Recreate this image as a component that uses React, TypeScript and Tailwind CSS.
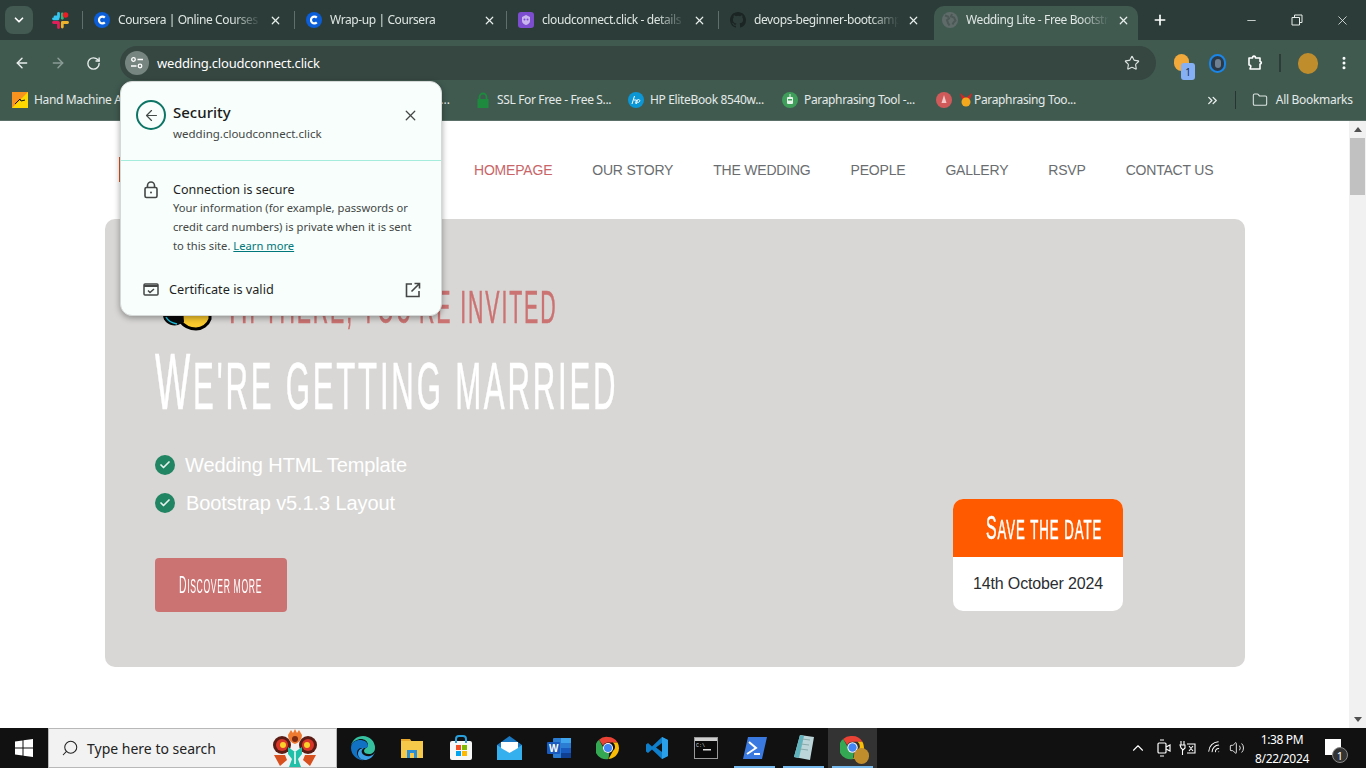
import React from "react";
import { ArrowLeft, ArrowRight, RotateCw, Star, X, Plus, Minus, ChevronDown, ChevronsRight, Folder, MoreVertical, Search, ChevronUp, Wifi, Volume2, Check } from "lucide-react";

const ui = "font-['Noto_Sans','Open_Sans',sans-serif]";
const display = "font-['Liberation_Sans_Narrow','Liberation_Sans',sans-serif]";
const fade = "[mask-image:linear-gradient(to_right,black_80%,transparent)]";

function CFav() {
  return (
    <svg width="16" height="16" viewBox="0 0 16 16" className="shrink-0">
      <circle cx="8" cy="8" r="8" fill="#0b5ed7" />
      <path d="M10.800 5.600A3.400 3.400 0 1 0 10.800 10.400" fill="none" stroke="#fff" strokeWidth="2.200" />
    </svg>
  );
}

function Slack() {
  return (
    <svg width="17" height="17" viewBox="0 0 17 17">
      <path d="M6.500 1.500v3.500H3" stroke="#36c5f0" strokeWidth="2.800" strokeLinecap="round" strokeLinejoin="round" fill="none" />
      <path d="M1.500 6.800h4.500" stroke="#36c5f0" strokeWidth="2.800" strokeLinecap="round" />
      <path d="M10.300 1.800v4.500" stroke="#2eb67d" strokeWidth="2.800" strokeLinecap="round" />
      <path d="M10.500 10.500H15.500" stroke="#ecb22e" strokeWidth="2.800" strokeLinecap="round" />
      <path d="M10.300 11v4" stroke="#ecb22e" strokeWidth="2.800" strokeLinecap="round" />
      <path d="M1.500 10.500H6" stroke="#e01e5a" strokeWidth="2.800" strokeLinecap="round" />
      <path d="M6.500 11v4.500" stroke="#e01e5a" strokeWidth="2.800" strokeLinecap="round" />
      <circle cx="13.500" cy="3" r="2.800" fill="#ea1c24" />
    </svg>
  );
}

function Bot() {
  return (
    <svg width="16" height="16" viewBox="0 0 16 16" className="shrink-0">
      <rect width="16" height="16" rx="3" fill="#7c4dce" />
      <path d="M4 5l4-2 4 2v4c0 2-2 3.500-4 4-2-.5-4-2-4-4z" fill="#c9b5ee" />
      <circle cx="6.500" cy="7.500" r="1" fill="#7c4dce" />
      <circle cx="9.500" cy="7.500" r="1" fill="#7c4dce" />
    </svg>
  );
}

function Github() {
  return (
    <svg width="16" height="16" viewBox="0 0 16 16" className="shrink-0">
      <path
        fill="#1b2523"
        d="M8 0C3.580 0 0 3.580 0 8c0 3.540 2.290 6.530 5.470 7.590.4.070.55-.17.55-.38 0-.19-.01-.82-.01-1.490-2.010.370-2.530-.49-2.690-.940-.09-.230-.48-.940-.82-1.130-.28-.150-.68-.520-.01-.530.630-.010 1.080.580 1.230.820.720 1.210 1.870.870 2.330.660.070-.520.280-.870.510-1.070-1.780-.200-3.640-.890-3.640-3.950 0-.870.310-1.590.820-2.150-.080-.200-.360-1.020.080-2.120 0 0 .670-.210 2.200.820a7.500 7.500 0 0 1 4 0c1.530-1.040 2.200-.820 2.200-.820.440 1.100.160 1.920.080 2.120.510.560.820 1.270.820 2.150 0 3.070-1.870 3.750-3.650 3.950.290.250.540.730.540 1.480 0 1.070-.010 1.930-.010 2.200 0 .210.150.460.550.380A8 8 0 0 0 16 8c0-4.420-3.580-8-8-8z"
      />
    </svg>
  );
}

function Globe() {
  return (
    <svg width="16" height="16" viewBox="0 0 16 16" className="shrink-0">
      <circle cx="8" cy="8" r="8" fill="#5f6b69" />
      <path d="M3 3.500l3 1 1 2-2 1.500 1 3 1.500 2.500M10 2l-1 2.500 3 1 1.500 3-2 2-1 2" fill="none" stroke="#4b5855" strokeWidth="2" />
    </svg>
  );
}

function Tab({ icon, title, active, w, sep, pad }: { icon: React.ReactNode; title: string; active?: boolean; w: string; sep?: boolean; pad: string }) {
  return (
    <div className={`relative flex items-center h-[34px] pb-[6px] shrink-0 ${pad} ${w} ${active ? "bg-[#405a50] rounded-t-[10px]" : ""}`}>
      {sep && <span className="absolute left-0 top-[5px] h-[18px] w-px bg-[#5e706b]" />}
      {icon}
      <span className={`ml-2 mr-[8px] flex-1 overflow-hidden whitespace-nowrap text-[12px] tracking-[-0.4px] text-[#dfe6e3] ${fade}`}>{title}</span>
      <X size={13} strokeWidth={2.200} className="shrink-0 text-[#e8eeec]" />
    </div>
  );
}

function TabStrip() {
  return (
    <div className="flex h-[40px] shrink-0 bg-[#2c3d39] pt-[6px] items-start">
      <div className="ml-[5px] flex h-[28px] w-[28px] items-center justify-center rounded-lg bg-[#425a52]">
        <ChevronDown size={14} strokeWidth={3} className="text-white" />
      </div>
      <div className="ml-[19px] flex h-[28px] w-[31px] items-center -mr-px">
        <Slack />
      </div>
      <Tab sep w="w-[212px]" pad="pl-[12px] pr-[12px]" icon={<CFav />} title="Coursera | Online Courses From Top" />
      <Tab sep w="w-[212px]" pad="pl-[12px] pr-[10px]" icon={<CFav />} title="Wrap-up | Coursera" />
      <Tab sep w="w-[212px]" pad="pl-[12px] pr-[12px]" icon={<Bot />} title="cloudconnect.click - details" />
      <Tab sep w="w-[216px]" pad="pl-[12px] pr-[14px]" icon={<Github />} title="devops-beginner-bootcamp" />
      <Tab active w="w-[204px]" pad="pl-[8px] pr-[8px]" icon={<Globe />} title="Wedding Lite - Free Bootstrap" />
      <Plus size={16} strokeWidth={2.500} className="ml-[14px] mt-[6px] text-white" />
      <div className="ml-auto flex h-[28px] items-center text-[#e8eeec]">
        <Minus size={13} strokeWidth={1.500} className="mr-[33px]" />
        <svg width="12" height="12" viewBox="0 0 12 12" className="mr-[32px]" fill="none" stroke="currentColor">
          <path d="M1 3.500h7.500V11H1zM3.500 3.500V1H11v7.500H8.500" />
        </svg>
        <X size={15} strokeWidth={1.300} className="mr-[16px]" />
      </div>
    </div>
  );
}

function Toolbar() {
  return (
    <div className="flex h-[46px] shrink-0 items-center bg-[#405a50] text-[#e8eeec]">
      <ArrowLeft size={16} strokeWidth={2.200} className="ml-[14px]" />
      <ArrowRight size={16} strokeWidth={2.200} className="ml-[20px] text-[#8b9d96]" />
      <RotateCw size={15} strokeWidth={2.200} className="ml-[20px]" />
      <div className="ml-[19px] flex h-[34px] w-[1036px] items-center rounded-full bg-[#364641]">
        <div className="ml-[5px] flex h-[24px] w-[24px] items-center justify-center rounded-full bg-[#76857f]">
          <svg width="14" height="14" viewBox="0 0 14 14" fill="none" stroke="#fff" strokeWidth="1.300">
            <circle cx="3.500" cy="3.500" r="1.800" />
            <path d="M7.500 3.500H13M1 10h5.500" />
            <circle cx="10" cy="10" r="1.800" />
          </svg>
        </div>
        <span className="ml-[8px] mt-[1px] text-[13px] text-white tracking-[-0.2px]">wedding.cloudconnect.click</span>
        <Star size={16} strokeWidth={1.700} className="ml-auto mr-[16px] text-[#dbe3e0]" />
      </div>
      <div className="relative ml-[18px] h-[18px] w-[18px]">
        <span className="absolute left-0 top-0 h-[17px] w-[15px] rounded-full bg-[#f0a93a]" />
        <span className="absolute left-[7px] top-[9px] flex h-[17px] w-[14px] items-center justify-center rounded-[3px] bg-[#86b0f5] text-[10px] text-[#1a2a44] leading-none">1</span>
      </div>
      <span className="ml-[17px] flex h-[19px] w-[17px] items-center justify-center rounded-full border-[2.500px] border-[#1a86e8] bg-[#2c3a47]">
        <span className="h-[9px] w-[6px] rounded-full bg-[#6e8092]" />
      </span>
      <svg width="16" height="16" viewBox="0 0 16 16" fill="none" stroke="#fff" strokeWidth="1.600" strokeLinejoin="round" className="ml-[21px]">
        <path d="M2 3h3.500c0-2.500 3-2.500 3 0H13v3.500c1.800 0 1.800 2.500 0 2.500V14H3l.8-2.500C3.800 10.500 2.800 10 2 10z" />
      </svg>
      <span className="ml-[16px] h-[18px] w-[2px] bg-[#2c3d39]" />
      <span className="ml-[17px] h-[21px] w-[20px] rounded-full bg-[#c08d2c]" />
      <MoreVertical size={16} strokeWidth={2.500} className="ml-[18px] text-white" />
    </div>
  );
}

function Bm({ icon, text, w }: { icon: React.ReactNode; text: string; w: string }) {
  return (
    <div className={`flex items-center shrink-0 ${w}`}>
      {icon}
      <span className="ml-[6px] whitespace-nowrap text-[12px] text-[#e4eae8] tracking-[-0.35px]">{text}</span>
    </div>
  );
}

function Bookmarks() {
  return (
    <div className="flex h-[28px] pb-[6px] shrink-0 items-center bg-[#405a50] border-b border-[#5b7068] box-content">
      <div className="ml-[12px] flex">
        <Bm
          w="w-[320px]"
          text="Hand Machine Attachment"
          icon={
            <svg width="16" height="16" viewBox="0 0 16 16">
              <rect width="16" height="16" fill="#f7931e" />
              <path d="M0 16L16 0v16z" fill="#ffd800" />
              <path d="M3 12l5-5 1 2 4-1" stroke="#111" fill="none" />
            </svg>
          }
        />
        <div className="flex w-[143px] shrink-0 justify-end pr-[25px] text-[12px] text-[#e4eae8]">...</div>
        <Bm
          w="w-[153px]"
          text="SSL For Free - Free S..."
          icon={
            <svg width="16" height="16" viewBox="0 0 16 16">
              <path d="M4.500 7V5a3.500 3.500 0 0 1 7 0v2" fill="none" stroke="#1d8a3e" strokeWidth="1.800" />
              <rect x="2.500" y="7" width="11" height="9" fill="#1d8a3e" />
            </svg>
          }
        />
        <Bm
          w="w-[154px]"
          text="HP EliteBook 8540w..."
          icon={
            <svg width="16" height="16" viewBox="0 0 16 16">
              <circle cx="8" cy="8" r="8" fill="#0b96d6" />
              <path d="M6.500 4L4 12M6 8h2.500L7.500 11.500M9.500 7.500L8.500 12M10 7.500c3 0 2 3-.5 3" stroke="#fff" fill="none" />
            </svg>
          }
        />
        <Bm
          w="w-[154px]"
          text="Paraphrasing Tool -..."
          icon={
            <svg width="16" height="16" viewBox="0 0 16 16">
              <circle cx="8" cy="8" r="8" fill="#3f9e5a" />
              <rect x="5" y="5" width="6" height="7" rx="1" fill="#e9f3ec" />
              <rect x="6" y="7" width="4" height="1.500" fill="#3f9e5a" />
              <path d="M8 5V2" stroke="#e9f3ec" />
            </svg>
          }
        />
        <div className="flex items-center shrink-0">
          <svg width="16" height="16" viewBox="0 0 16 16">
            <circle cx="8" cy="8" r="8" fill="#d05a5a" />
            <path d="M8 3l2.500 8h-5z" fill="#f3c9c9" />
          </svg>
          <svg width="14" height="16" viewBox="0 0 14 16" className="ml-[7px]">
            <path d="M1 1l6 5 6-5-2 6H3z" fill="#d22" />
            <circle cx="7" cy="10" r="4.500" fill="#f3a81d" />
          </svg>
          <span className="ml-px whitespace-nowrap text-[12px] text-[#e4eae8] tracking-[-0.35px]">Paraphrasing Too...</span>
        </div>
      </div>
      <ChevronsRight size={15} strokeWidth={2.200} className="ml-[129px] text-[#e8eeec]" />
      <span className="ml-[15px] h-[18px] w-[1px] bg-[#26352f]" />
      <Folder size={16} strokeWidth={1.600} className="ml-[16px] text-[#dbe3e0]" />
      <span className="ml-[8px] whitespace-nowrap text-[12px] text-[#e4eae8] tracking-[-0.3px]">All Bookmarks</span>
    </div>
  );
}

function Popup() {
  return (
    <div className={`absolute left-[120px] top-[81px] z-20 h-[235px] w-[322px] rounded-[12px] border border-[#d5dad8] bg-[#f7fefb] shadow-[0_2px_6px_rgba(0,0,0,0.35)] ${ui}`}>
      <div className="flex h-[79px] items-start border-b border-[#a5ecdc] pl-[15px] pr-[22px] pt-[18px]">
        <div className="flex h-[30px] w-[30px] items-center justify-center rounded-full border-2 border-[#0d7565]">
          <ArrowLeft size={17} strokeWidth={1.700} className="text-[#444c4a]" />
        </div>
        <div className="ml-[7px]">
          <div className="text-[15px] font-medium leading-[20px] mt-[2px] text-[#1a1c1b]">Security</div>
          <div className="mt-[5px] text-[11.500px] leading-[14px] text-[#444746]">wedding.cloudconnect.click</div>
        </div>
        <X size={17} strokeWidth={1.800} className="ml-auto mt-[7px] text-[#444746]" />
      </div>
      <div className="flex pl-[23px] pt-[19px]">
        <svg width="14" height="18" viewBox="0 0 14 18" fill="none" stroke="#444746" strokeWidth="1.600" className="mt-[1px]">
          <rect x="1" y="6.500" width="12" height="10" rx="1.500" />
          <path d="M3.500 6.500V4.500a3.500 3.500 0 0 1 7 0v2" />
          <circle cx="7" cy="11.500" r="1" fill="#444746" stroke="none" />
        </svg>
        <div className="ml-[15px] w-[250px]">
          <div className="text-[12.500px] leading-[18px] text-[#1f1f1f] mt-[1px]">Connection is secure</div>
          <div className="-mt-[1px] text-[11.200px] leading-[19px] text-[#444746] whitespace-nowrap">
            Your information (for example, passwords or
            <br />
            credit card numbers) is private when it is sent
            <br />
            to this site. <span className="text-[#00777a] underline">Learn more</span>
          </div>
        </div>
      </div>
      <div className="mt-[25px] flex items-center pl-[22px] pr-[20px]">
        <svg width="16" height="13" viewBox="0 0 16 13" fill="none" stroke="#444746" strokeWidth="1.500">
          <rect x="1" y="1" width="14" height="11" rx="1" />
          <path d="M1 3h14" strokeWidth="2" />
          <path d="M5 7.500l2 2 4-3.500" />
        </svg>
        <span className="ml-[10px] text-[12.700px] text-[#1f1f1f]">Certificate is valid</span>
        <svg width="16" height="16" viewBox="0 0 16 16" fill="none" stroke="#444746" strokeWidth="1.600" className="ml-auto">
          <path d="M7 2H1.500v12.500H14V9M6.500 9.500L14 2M9.500 1.500h5v5" />
        </svg>
      </div>
    </div>
  );
}

function Display({ text, cls }: { text: string; cls: string }) {
  return (
    <span className={`inline-block origin-left whitespace-nowrap uppercase [-webkit-text-stroke:0.6px_currentColor] first-letter:text-[1.2em] ${display} ${cls}`}>
      {text}
    </span>
  );
}

function CheckItem({ text, cls }: { text: string; cls: string }) {
  return (
    <div className="flex items-center h-[38px]">
      <span className="flex h-5 w-5 items-center justify-center rounded-full bg-[#218463]">
        <Check size={12} strokeWidth={3.500} className="text-[#e6f2ee]" />
      </span>
      <span className={`text-[20px] tracking-[-0.1px] text-white ${cls}`}>{text}</span>
    </div>
  );
}

function Page() {
  const nav = ["HOMEPAGE", "OUR STORY", "THE WEDDING", "PEOPLE", "GALLERY", "RSVP", "CONTACT US"];
  return (
    <div className="relative flex-1 overflow-hidden bg-white flex font-['Liberation_Sans',sans-serif]">
      <div className="flex-1 min-w-0">
        <div className="flex h-[98px] items-center">
          <span className="ml-[119px] h-[25px] w-px bg-[#d9541e] -mt-[2px]" />
          <nav className="ml-[354px] flex gap-[40px]">
            {nav.map((n, i) => (
              <span key={n} className={`text-[14px] tracking-[-0.2px] whitespace-nowrap ${i === 0 ? "text-[#c96568]" : "text-[#6a6d70]"}`}>
                {n}
              </span>
            ))}
          </nav>
        </div>
        <section className="relative ml-[105px] h-[448px] w-[1140px] rounded-[10px] bg-[#d8d7d5] pl-[50px]">
          <div className="flex items-center pt-[66px] h-[106px]">
            <svg width="60" height="36" viewBox="0 0 60 36" className="-ml-[1px] mt-[16px] shrink-0">
              <path d="M26 26c4 5 10 8 16 8s12-4 14-10V0H26z" fill="#f9c92d" stroke="#000" strokeWidth="3" />
              <path d="M9 20c0 7 8 12 15 10l6-3L28 0 9 0z" fill="#0a0a0a" />
              <path d="M12 22c2 4 6 6 11 7" stroke="#19bfe0" strokeWidth="1.600" fill="none" />
            </svg>
            <Display text="Hi there, You're Invited" cls="ml-[15px] text-[46px] leading-none tracking-[4px] text-[#cb7372] scale-x-[0.464] shrink-0" />
          </div>
          <div className="mt-[21px] h-[70px] leading-[70px]">
            <Display text="We're getting married" cls="text-[67px] tracking-[6px] text-white scale-x-[0.465]" />
          </div>
          <div className="mt-[30px]">
            <CheckItem text="Wedding HTML Template" cls="ml-[10px]" />
            <CheckItem text="Bootstrap v5.1.3 Layout" cls="ml-[11px]" />
          </div>
          <div className="mt-[36px] flex h-[54px] w-[132px] items-center overflow-hidden rounded-[4px] bg-[#cb7372] pl-[24px]">
            <Display text="Discover more" cls="text-[20px] tracking-[1.500px] text-white scale-x-[0.432] [-webkit-text-stroke:0px]" />
          </div>
          <div className="absolute bottom-[56px] right-[122px] h-[112px] w-[170px] overflow-hidden rounded-[10px] bg-white">
            <div className="flex h-[58px] items-center bg-[#ff5a00] pl-[33px]">
              <Display text="Save the date" cls="text-[28px] tracking-[2px] text-white scale-x-[0.473]" />
            </div>
            <div className="flex h-[54px] items-center justify-center text-[16px] tracking-[-0.15px] text-[#2a2d30]">14th October 2024</div>
          </div>
        </section>
      </div>
      <div className="flex w-[17px] shrink-0 flex-col items-center bg-[#f1f1f1]">
        <div className="flex h-[17px] items-center justify-center">
          <span className="h-0 w-0 border-x-[4px] border-b-[5px] border-x-transparent border-b-[#505050]" />
        </div>
        <div className="h-[57px] w-[15px] bg-[#c1c1c1]" />
        <div className="mt-auto flex h-[17px] items-center justify-center">
          <span className="h-0 w-0 border-x-[4px] border-t-[5px] border-x-transparent border-t-[#505050]" />
        </div>
      </div>
    </div>
  );
}

function Chrome({ size = 24 }: { size?: number }) {
  return (
    <svg width={size} height={size} viewBox="0 0 24 24">
      <path d="M12 1a11 11 0 0 1 9.530 5.500H12a5.500 5.500 0 0 0-5 3.200L3 3.800A11 11 0 0 1 12 1z" fill="#ea4335" />
      <path d="M21.530 6.500A11 11 0 0 1 12.500 23l4.300-7.700a5.500 5.500 0 0 0 .1-8.800z" fill="#fbbc05" />
      <path d="M12.500 23A11 11 0 0 1 3 3.800l4.200 7.500a5 5 0 0 0 5 5.700h1z" fill="#34a853" />
      <circle cx="12" cy="12" r="5" fill="#fff" />
      <circle cx="12" cy="12" r="4" fill="#4285f4" />
    </svg>
  );
}

function TI({ children, under, active }: { children: React.ReactNode; under?: boolean; active?: boolean }) {
  return (
    <div className={`relative flex h-[40px] w-[49px] shrink-0 items-center justify-center ${active ? "bg-[#333]" : ""}`}>
      {children}
      {under && <span className="absolute bottom-0 left-[4px] right-[4px] h-[2px] bg-[#76b9ed]" />}
    </div>
  );
}

function Taskbar() {
  return (
    <div className="flex h-[40px] shrink-0 items-center bg-[#111] font-['Noto_Sans',sans-serif]">
      <div className="flex w-[48px] justify-center">
        <svg width="18" height="18" viewBox="0 0 18 18" fill="#fff" className="-ml-[1px]">
          <path d="M0 2.500l7.500-1v7H0zM8.500 1.300L18 0v8.500H8.500zM0 9.500h7.500v7l-7.500-1zM8.500 9.500H18V18l-9.500-1.300z" />
        </svg>
      </div>
      <div className="flex h-[40px] w-[289px] items-center border border-[#b8b8b8] bg-[#f2f2f2] pl-[12px]">
        <Search size={18} strokeWidth={1.400} className="-scale-x-100 text-[#222]" />
        <span className="ml-[8px] text-[14px] text-[#222]">Type here to search</span>
        <svg width="46" height="40" viewBox="0 0 46 40" className="ml-[56px]">
          <path d="M16 7l3-5 2 3 2-4 2 4 2-3 3 5c0 5-4 8-7 9-3-1-7-4-7-9z" fill="#ee7a32" />
          <circle cx="23" cy="11" r="3" fill="#7a2a12" />
          <circle cx="10" cy="17" r="9" fill="#5a1c14" />
          <circle cx="10" cy="17" r="6" fill="#d9362a" />
          <circle cx="11" cy="17" r="3" fill="#f8d12a" />
          <circle cx="36" cy="17" r="9" fill="#5a1c14" />
          <circle cx="36" cy="17" r="6" fill="#d9362a" />
          <circle cx="35" cy="17" r="3" fill="#f8d12a" />
          <path d="M2 27h11l2 5-7 6zM44 27H33l-2 5 7 6z" fill="#d9501f" />
          <path d="M16 19l7 5 7-5v7l-4 5 3 8H17l3-8-4-5z" fill="#20c0a8" />
          <path d="M23 24v12" stroke="#fff" strokeWidth="1.500" />
        </svg>
      </div>
      <div className="ml-[1px] flex">
        <TI>
          <svg width="26" height="26" viewBox="0 0 26 26">
            <path d="M13 1a12 12 0 0 1 12 12c0 4-3 6-6 6s-5-1-5-3c0-3 4-3 4-6 0-4-4-6-7-6S2 6 1 11C2 5 7 1 13 1z" fill="#35c1a0" />
            <path d="M1 13C1 7 6 5 10 5s8 2 8 6c0 2-3 2-6 2s-5 2-5 5 3 7 7 7C9 26 1 21 1 13z" fill="#1172c4" />
            <path d="M25 17c-2 6-7 8-10 8-4 0-7-3-7-6 0-4 3-6 6-6-2 1-3 3-2 5s5 4 8 3 4-2 5-4z" fill="#3aa0e8" />
          </svg>
        </TI>
        <TI>
          <svg width="24" height="24" viewBox="0 0 24 24">
            <path d="M1 3h9l2 3h-11z" fill="#e8a82c" />
            <rect x="1" y="5" width="22" height="17" fill="#f6c94a" />
            <rect x="7" y="14" width="10" height="8" fill="#2a8fd6" />
            <rect x="10" y="17" width="4" height="5" fill="#f6c94a" />
          </svg>
        </TI>
        <TI>
          <svg width="24" height="26" viewBox="0 0 24 26">
            <rect x="1" y="6" width="22" height="19" rx="2" fill="#f7f7f7" />
            <path d="M7 8V4a3 3 0 0 1 3-3h4a3 3 0 0 1 3 3v4" stroke="#27a0dd" strokeWidth="2" fill="none" />
            <rect x="7" y="10" width="5" height="5" fill="#f25022" />
            <rect x="13" y="10" width="5" height="5" fill="#7fba00" />
            <rect x="7" y="16" width="5" height="5" fill="#00a4ef" />
            <rect x="13" y="16" width="5" height="5" fill="#ffb900" />
          </svg>
        </TI>
        <TI>
          <svg width="25" height="24" viewBox="0 0 25 24">
            <path d="M12.500 0L25 9v15H0V9z" fill="#1a78c2" />
            <path d="M0 9l12.500 8L25 9v15H0z" fill="#35b0ee" />
            <path d="M4 6h17v6l-8.500 5L4 12z" fill="#fff" />
          </svg>
        </TI>
        <TI>
          <svg width="24" height="24" viewBox="0 0 24 24">
            <rect x="6" y="2" width="18" height="20" rx="1" fill="#2b7cd3" />
            <rect x="14" y="2" width="10" height="5" fill="#41a5ee" />
            <rect x="14" y="12" width="10" height="5" fill="#185abd" />
            <rect x="14" y="17" width="10" height="5" fill="#103f91" />
            <rect x="0" y="6" width="13" height="12" rx="1" fill="#185abd" />
            <text x="2" y="15.500" fontSize="10" fontWeight="700" fill="#fff" fontFamily="Liberation Sans">W</text>
          </svg>
        </TI>
        <TI>
          <Chrome />
        </TI>
        <TI>
          <svg width="24" height="24" viewBox="0 0 24 24">
            <path d="M17 1l6 3v16l-6 3-10-9.500L3 17l-2-1.500v-7L3 7l4 3.500z" fill="#0f7fcb" />
            <path d="M17 7l-6 4.500 6 4.500z" fill="#111" />
            <path d="M17 1l6 3v16l-6 3z" fill="#2aa0ea" />
          </svg>
        </TI>
        <TI>
          <svg width="24" height="22" viewBox="0 0 24 22">
            <rect x="0.500" y="0.500" width="23" height="21" fill="#0a0a0a" stroke="#999" />
            <rect x="1" y="1" width="22" height="3" fill="#cfcfcf" />
            <text x="2" y="10" fontSize="5" fill="#ddd" fontFamily="Liberation Mono">C:\</text>
            <rect x="9" y="12" width="8" height="1.500" fill="#ddd" />
          </svg>
        </TI>
        <TI under>
          <svg width="24" height="22" viewBox="0 0 24 22">
            <path d="M5 0h19l-5 22H0z" fill="#3a7ae0" />
            <path d="M6 5l7 6-9 6" stroke="#fff" strokeWidth="2" fill="none" />
            <path d="M11 17h6" stroke="#fff" strokeWidth="2" />
          </svg>
        </TI>
        <TI under>
          <svg width="24" height="28" viewBox="0 0 24 28">
            <path d="M8 1l14 2-4 23-16-3z" fill="#bcd5d8" />
            <path d="M2 23L8 1l4 1-5 22z" fill="#5fb3bd" />
            <path d="M10 5l8 1M9 10l8 1M8 15l8 1" stroke="#8aa" />
          </svg>
        </TI>
        <TI under active>
          <div className="relative h-[26px] w-[26px]">
            <Chrome size={25} />
            <span className="absolute -bottom-[3px] -right-[3px] h-[16px] w-[15px] rounded-full bg-[#c08d2c]" />
          </div>
        </TI>
      </div>
      <div className="ml-auto flex items-center text-white">
        <ChevronUp size={18} strokeWidth={1.500} />
        <svg width="14" height="20" viewBox="0 0 14 20" fill="none" stroke="#fff" strokeWidth="1.200" className="ml-[10px]">
          <rect x="1" y="5" width="8" height="10" rx="1" />
          <path d="M9 9l4-2v6l-4-2M3 2h4M3 18h4" />
        </svg>
        <svg width="17" height="16" viewBox="0 0 17 16" fill="none" stroke="#fff" strokeWidth="1.100" className="ml-[8px]">
          <path d="M2 1v4M5 1v4M1 5h5v3l-2 2-2-2zM3.500 10v5M8 4h8v9H8M10 6l4 5M14 6l-4 5" />
        </svg>
        <Wifi size={16} strokeWidth={1.500} className="ml-[11px] -rotate-45" />
        <Volume2 size={16} strokeWidth={1.300} className="ml-[6px]" />
        <div className="ml-[8px] flex w-[58px] flex-col items-center text-[12px] leading-[19px] pt-[1px] tracking-[-0.35px]">
          <span>1:38 PM</span>
          <span>8/22/2024</span>
        </div>
        <div className="relative ml-[14px] mr-[25px] h-[18px] w-[16px]">
          <span className="absolute left-0 top-0 h-[16px] w-[16px] bg-white" />
          <span className="absolute left-[7px] top-[8px] flex h-[16px] w-[16px] items-center justify-center rounded-full border border-[#888] bg-[#333] text-[11px] leading-none text-white">1</span>
        </div>
      </div>
    </div>
  );
}

export default function App() {
  return (
    <div className={`relative flex h-[768px] w-[1366px] flex-col overflow-hidden ${ui}`}>
      <TabStrip />
      <Toolbar />
      <Bookmarks />
      <Page />
      <Taskbar />
      <Popup />
    </div>
  );
}
